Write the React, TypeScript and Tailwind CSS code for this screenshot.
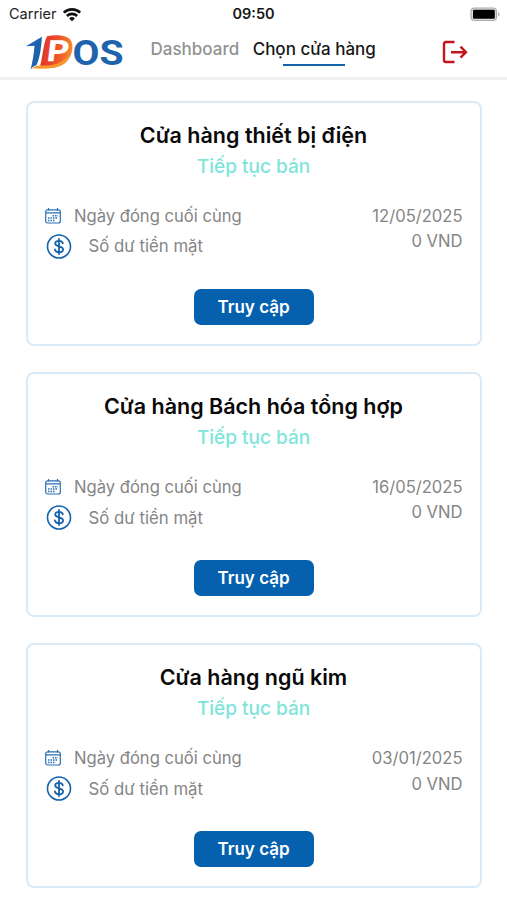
type Store = {
  name: string
  closedAt: string
  cash: string
}

const stores: Store[] = [
  { name: 'Cửa hàng thiết bị điện', closedAt: '12/05/2025', cash: '0 VND' },
  { name: 'Cửa hàng Bách hóa tổng hợp', closedAt: '16/05/2025', cash: '0 VND' },
  { name: 'Cửa hàng ngũ kim', closedAt: '03/01/2025', cash: '0 VND' },
]

function WifiIcon() {
  return (
    <svg width="20" height="15" viewBox="0 0 20 15" fill="none" stroke="#111" strokeWidth="2.7">
      <path d="M1.8 5.6a11.8 11.8 0 0 1 16.4 0" />
      <path d="M4.9 9a7.4 7.4 0 0 1 10.2 0" />
      <path d="M10 14.3 7.1 11.4a4.1 4.1 0 0 1 5.8 0z" fill="#111" stroke="none" />
    </svg>
  )
}

function BatteryIcon() {
  return (
    <svg width="31" height="15" viewBox="0 0 31 15">
      <rect x="1" y="1" width="25.5" height="12.5" rx="3.5" fill="#ddd" stroke="#aaa" strokeWidth="1.2" />
      <rect x="3" y="2.8" width="21.8" height="9" rx="1.2" fill="#000" />
      <path d="M28.2 5v4.6c1.9-.8 1.9-3.8 0-4.6z" fill="#aaa" />
    </svg>
  )
}

function Logo() {
  return (
    <svg width="102" height="44" viewBox="0 0 102 44" className="overflow-visible">
      <defs>
        <linearGradient id="flame" x1="0" y1="0.4" x2="1" y2="0.5">
          <stop offset="0" stopColor="#e0332b" />
          <stop offset="0.5" stopColor="#ec4e2a" />
          <stop offset="1" stopColor="#f58a2b" />
        </linearGradient>
      </defs>
      <g transform="translate(0 1.2)">
        <path d="M16 33C19 23 19 11 23 3c9-2 19-1 23 3 5 6 2 18-5 24-7 5-17 6-25 3z" fill="url(#flame)" />
        <path d="M8 35c5-4 11-2 18-3 9-1 16-5 20-12-3 13-14 17-38 15z" fill="#f79a2e" />
        {/* the leading digit leans into the flame */}
        <path d="M2 13C7 10 12 7 18 3.5c-1 12-2 21-5.500 28.500-2 .5-4 1.500-6 4.500C8.500 29 10 20 10.500 12.500z" fill="#1e64ad" />
      </g>
      <text
        x="22.5"
        y="29.5"
        fontSize="29"
        fontWeight="700"
        fill="#fff"
        stroke="#fff"
        strokeWidth="0.5"
        textLength="21.5"
        lengthAdjust="spacingAndGlyphs"
        transform="translate(3.5 0) skewX(-7)"
        className="font-['Roboto',sans-serif]"
      >
        P
      </text>
      <text
        x="48.5"
        y="33"
        fontSize="35"
        fontWeight="700"
        fill="#1e64ad"
        textLength="51"
        lengthAdjust="spacingAndGlyphs"
        className="font-['Roboto',sans-serif]"
      >
        OS
      </text>
    </svg>
  )
}

function LogoutIcon() {
  return (
    <svg width="26" height="24" viewBox="0 0 26 24" fill="none" stroke="#c4161c" strokeWidth="2.4">
      <path d="M12.5 2H4Q2 2 2 4v16Q2 22 4 22h8.500" />
      <path d="M9 12.2h15M18.5 6.7l5.500 5.500-5.500 5.500" />
    </svg>
  )
}

function CalendarIcon() {
  return (
    <svg width="16" height="16" viewBox="0 0 16 16" fill="none" stroke="#2a70b4" strokeWidth="1.2">
      <rect x="0.7" y="1.8" width="14.6" height="13.2" rx="2" />
      <path d="M1 4.8h14M3.5 0v2.500M12.5 0v2.500" />
      <path d="M7.5 7.7h5.500M3 10.100h10M3 12.500h7.500" strokeWidth="1.5" strokeDasharray="1.5 1" />
    </svg>
  )
}

function DollarIcon() {
  return (
    <svg width="26" height="26" viewBox="0 0 26 26" fill="none" stroke="#1563ad" strokeLinecap="round">
      <circle cx="13" cy="12.5" r="11.5" strokeWidth="1.6" />
      <path d="M16.8 9.300c-.4-1.600-1.800-2.500-3.800-2.500-2.200 0-3.800 1.100-3.800 2.800 0 3.800 7.900 1.900 7.900 5.900 0 1.700-1.700 2.800-4.100 2.800-2.200 0-3.700-1.100-4.100-2.800M13 4.900v15.200" strokeWidth="1.8" />
    </svg>
  )
}

function StoreCard({ store }: { store: Store }) {
  return (
    <section className="flex h-[245px] flex-col items-center rounded-lg border-2 border-[#d9eaf8] px-[17px] pt-[18px]">
      <h2 className="h-[31px] whitespace-nowrap text-[21.5px] font-semibold leading-[28px] text-[#090909]">
        {store.name}
      </h2>
      <p className="h-[38px] text-[19px] font-medium leading-[30px] text-[#7ee5db]">Tiếp tục bán</p>

      <div className="mt-[13px] flex w-full justify-between text-[16.6px] text-[#858585]">
        <div>
          <div className="flex h-[26px] items-center">
            <CalendarIcon />
            <span className="ml-[13.5px] pt-px">Ngày đóng cuối cùng</span>
          </div>
          <div className="flex h-[36px] items-center pl-px">
            <DollarIcon />
            <span className="ml-[17px] pt-px text-[16.8px]">Số dư tiền mặt</span>
          </div>
        </div>
        <div className="pt-px text-right leading-[25.5px]">
          <div>{store.closedAt}</div>
          <div>{store.cash}</div>
        </div>
      </div>

      <button className="mt-[24px] h-[36px] w-[120px] rounded-[7px] bg-[#0560ae] pt-[2px] text-[17px] font-semibold text-white">
        Truy cập
      </button>
    </section>
  )
}

export default function App() {
  return (
    <div className="h-[900px] w-[507px] overflow-hidden bg-white font-['Inter',sans-serif]">
      <div className="grid h-[28px] grid-cols-3 items-center pl-[9px] pr-[6px] text-[14.5px]">
        <div className="flex items-center gap-[5px] text-[#222]">
          Carrier
          <WifiIcon />
        </div>
        <div className="pr-[3px] text-center font-semibold text-[#171717]">09:50</div>
        <div className="flex justify-end">
          <BatteryIcon />
        </div>
      </div>

      <header className="flex h-[52px] items-start border-b-[3px] border-[#f1f1f1] pl-6 pr-[39px] text-[17px] font-medium">
        <div className="pt-1">
          <Logo />
        </div>
        <nav className="flex gap-[13.5px] pl-[24.5px] pt-[7px] leading-[28px]">
          <span className="text-[#929292]">Dashboard</span>
          <span className="flex flex-col items-center text-[#171717]">
            Chọn cửa hàng
            <span className="mt-[1px] h-[2px] w-[62px] bg-[#1261ad]" />
          </span>
        </nav>
        <div className="ml-auto pt-[12px]">
          <LogoutIcon />
        </div>
      </header>

      <main className="flex flex-col gap-[26.3px] px-[25.5px] pt-[20.5px]">
        {stores.map((store) => (
          <StoreCard key={store.name} store={store} />
        ))}
      </main>
    </div>
  )
}
